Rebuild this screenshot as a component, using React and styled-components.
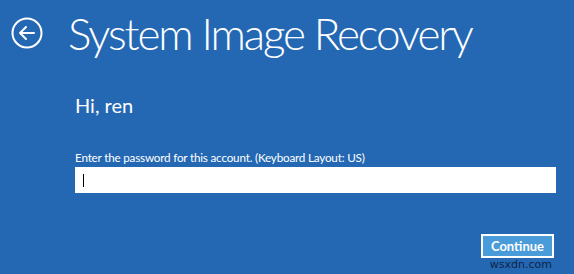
import React from "react";
import styled, { createGlobalStyle } from "styled-components";

const Global = createGlobalStyle`
  html, body { margin: 0; padding: 0; }
  body { background: #2468b4; font-family: "Lato", "Open Sans", sans-serif; }
`;

const Page = styled.div`
  width: 574px;
  height: 274px;
  background: #2468b4;
  color: #fff;
  box-sizing: border-box;
  padding: 9px 18px 0 11px;
  display: flex;
  flex-direction: column;
  position: relative;
  overflow: hidden;
`;

const Header = styled.div`
  display: flex;
  align-items: center;
  gap: 25px;
  height: 48px;
`;

const BackButton = styled.button`
  width: 32px;
  height: 32px;
  padding: 0;
  border: none;
  background: transparent;
  display: flex;
  align-items: center;
  justify-content: center;
`;

const Title = styled.h1`
  margin: 0;
  font-family: "Lato", sans-serif;
  font-weight: 300;
  font-size: 44px;
  line-height: 48px;
  letter-spacing: -2.1px;
  color: #fff;
`;

const Content = styled.div`
  margin-left: 64px;
  display: flex;
  flex-direction: column;
`;

const Greeting = styled.div`
  margin-top: 36px;
  font-size: 20px;
  line-height: 24px;
  font-weight: 400;
`;

const Label = styled.div`
  margin-top: 32px;
  font-size: 11.7px;
  line-height: 16px;
  letter-spacing: -0.2px;
`;

const Input = styled.div`
  margin-top: 2px;
  width: 481px;
  height: 26px;
  background: #fff;
  display: flex;
  align-items: center;
  padding-left: 8px;
  box-sizing: border-box;
`;

const Caret = styled.div`
  width: 1px;
  height: 13px;
  background: #000;
`;

const Footer = styled.div`
  display: flex;
  justify-content: flex-end;
  margin-top: 41px;
  padding-right: 2px;
`;

const ContinueButton = styled.button`
  width: 73px;
  height: 24px;
  box-sizing: border-box;
  border: 2px solid #fff;
  background: #4a9bd9;
  color: #fff;
  font-family: "Lato", sans-serif;
  font-weight: 700;
  font-size: 13px;
  padding: 0;
`;

const Watermark = styled.div`
  position: absolute;
  right: 22px;
  bottom: 3px;
  font-family: "DejaVu Sans", sans-serif;
  font-size: 11px;
  color: #0d2445;
`;

export default function App() {
  return (
    <>
      <Global />
      <Page>
        <Header>
          <BackButton aria-label="Back">
            <svg width="32" height="32" viewBox="0 0 32 32" fill="none" stroke="#fff" strokeWidth="2">
              <circle cx="16" cy="16" r="14.5" />
              <path d="M9 16 H23 M15 10 L9 16 L15 22" strokeLinecap="round" strokeLinejoin="round" />
            </svg>
          </BackButton>
          <Title>System Image Recovery</Title>
        </Header>
        <Content>
          <Greeting>Hi, ren</Greeting>
          <Label>Enter the password for this account. (Keyboard Layout: US)</Label>
          <Input>
            <Caret />
          </Input>
          <Footer>
            <ContinueButton>Continue</ContinueButton>
          </Footer>
        </Content>
        <Watermark>wsxdn.com</Watermark>
      </Page>
    </>
  );
}
